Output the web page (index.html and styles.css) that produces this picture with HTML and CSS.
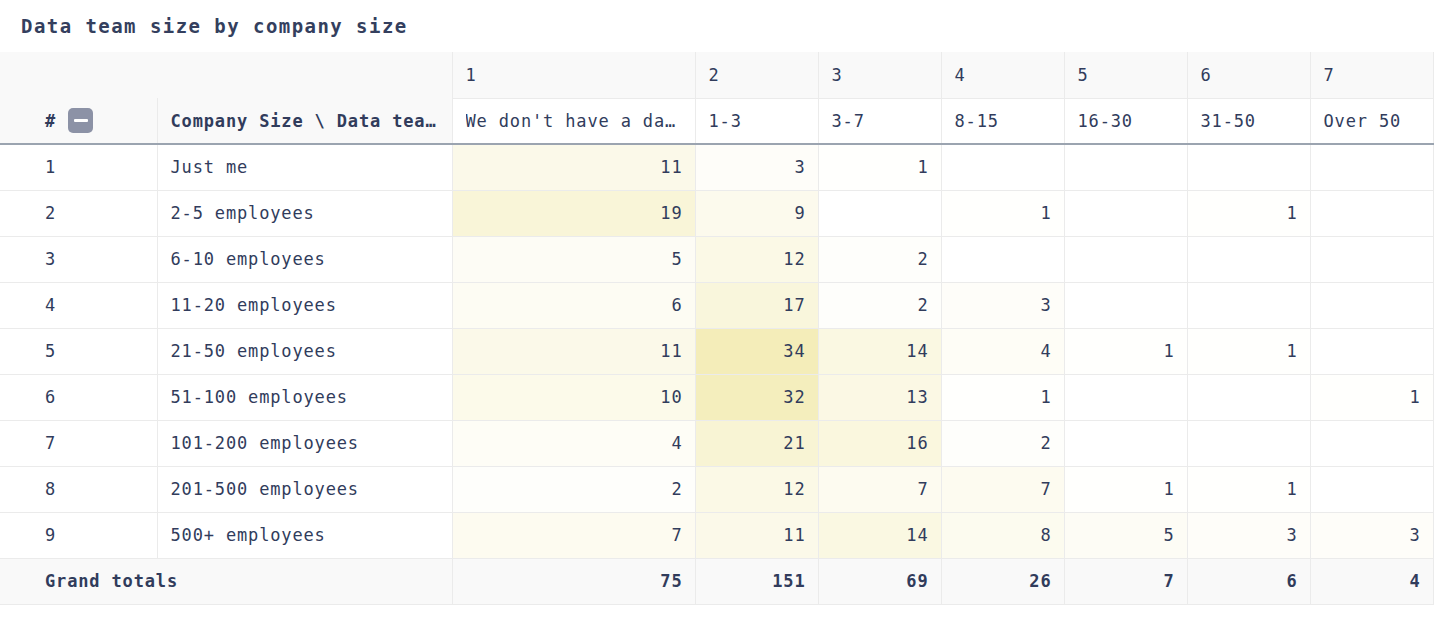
FILE: index.html
```html
<!DOCTYPE html>
<html>
<head>
<meta charset="utf-8">
<link rel="stylesheet" href="styles.css">
</head>
<body>
<h1 class="title">Data team size by company size</h1>
<table class="pivot">
  <colgroup>
    <col class="c-num"><col class="c-name"><col class="c-wide">
    <col class="c-val"><col class="c-val"><col class="c-val"><col class="c-val"><col class="c-val"><col class="c-val">
  </colgroup>
  <thead>
    <tr class="idx-row">
      <th colspan="2" class="blank"></th>
      <th>1</th><th>2</th><th>3</th><th>4</th><th>5</th><th>6</th><th>7</th>
    </tr>
    <tr class="label-row">
      <th class="hash"><span class="hash-wrap">#<span class="collapse"><span class="bar"></span></span></span></th>
      <th class="name-head"><span class="ellip">Company Size \ Data team size</span></th>
      <th><span class="ellip">We don't have a data team</span></th>
      <th>1-3</th><th>3-7</th><th>8-15</th><th>16-30</th><th>31-50</th><th>Over 50</th>
    </tr>
  </thead>
  <tbody>
    <tr><td class="rn">1</td><td class="nm">Just me</td>
      <td style="background:rgba(230,215,100,0.146)">11</td><td style="background:rgba(230,215,100,0.04)">3</td><td style="background:rgba(230,215,100,0.013)">1</td><td></td><td></td><td></td><td></td></tr>
    <tr><td class="rn">2</td><td class="nm">2-5 employees</td>
      <td style="background:rgba(230,215,100,0.251)">19</td><td style="background:rgba(230,215,100,0.119)">9</td><td></td><td style="background:rgba(230,215,100,0.013)">1</td><td></td><td style="background:rgba(230,215,100,0.013)">1</td><td></td></tr>
    <tr><td class="rn">3</td><td class="nm">6-10 employees</td>
      <td style="background:rgba(230,215,100,0.066)">5</td><td style="background:rgba(230,215,100,0.159)">12</td><td style="background:rgba(230,215,100,0.026)">2</td><td></td><td></td><td></td><td></td></tr>
    <tr><td class="rn">4</td><td class="nm">11-20 employees</td>
      <td style="background:rgba(230,215,100,0.079)">6</td><td style="background:rgba(230,215,100,0.225)">17</td><td style="background:rgba(230,215,100,0.026)">2</td><td style="background:rgba(230,215,100,0.04)">3</td><td></td><td></td><td></td></tr>
    <tr><td class="rn">5</td><td class="nm">21-50 employees</td>
      <td style="background:rgba(230,215,100,0.146)">11</td><td style="background:rgba(230,215,100,0.45)">34</td><td style="background:rgba(230,215,100,0.185)">14</td><td style="background:rgba(230,215,100,0.053)">4</td><td style="background:rgba(230,215,100,0.013)">1</td><td style="background:rgba(230,215,100,0.013)">1</td><td></td></tr>
    <tr><td class="rn">6</td><td class="nm">51-100 employees</td>
      <td style="background:rgba(230,215,100,0.132)">10</td><td style="background:rgba(230,215,100,0.424)">32</td><td style="background:rgba(230,215,100,0.172)">13</td><td style="background:rgba(230,215,100,0.013)">1</td><td></td><td></td><td style="background:rgba(230,215,100,0.013)">1</td></tr>
    <tr><td class="rn">7</td><td class="nm">101-200 employees</td>
      <td style="background:rgba(230,215,100,0.053)">4</td><td style="background:rgba(230,215,100,0.278)">21</td><td style="background:rgba(230,215,100,0.212)">16</td><td style="background:rgba(230,215,100,0.026)">2</td><td></td><td></td><td></td></tr>
    <tr><td class="rn">8</td><td class="nm">201-500 employees</td>
      <td style="background:rgba(230,215,100,0.026)">2</td><td style="background:rgba(230,215,100,0.159)">12</td><td style="background:rgba(230,215,100,0.093)">7</td><td style="background:rgba(230,215,100,0.093)">7</td><td style="background:rgba(230,215,100,0.013)">1</td><td style="background:rgba(230,215,100,0.013)">1</td><td></td></tr>
    <tr><td class="rn">9</td><td class="nm">500+ employees</td>
      <td style="background:rgba(230,215,100,0.093)">7</td><td style="background:rgba(230,215,100,0.146)">11</td><td style="background:rgba(230,215,100,0.185)">14</td><td style="background:rgba(230,215,100,0.106)">8</td><td style="background:rgba(230,215,100,0.066)">5</td><td style="background:rgba(230,215,100,0.04)">3</td><td style="background:rgba(230,215,100,0.04)">3</td></tr>
  </tbody>
  <tfoot>
    <tr><td colspan="2" class="gt">Grand totals</td>
      <td>75</td><td>151</td><td>69</td><td>26</td><td>7</td><td>6</td><td>4</td></tr>
  </tfoot>
</table>
</body>
</html>
```
FILE: styles.css
```css
html, body {
  margin: 0;
  padding: 0;
  background: #ffffff;
}
body {
  font-family: "DejaVu Sans Mono", "Liberation Mono", monospace;
  color: #313c5c;
}
.title {
  margin: 0;
  padding: 14px 0 0 21px;
  height: 38px;
  box-sizing: border-box;
  font-size: 19px;
  line-height: 24px;
  font-weight: bold;
  letter-spacing: 1.45px;
  color: #343f5e;
}
.pivot {
  border-collapse: collapse;
  table-layout: fixed;
  width: 1433px;
  font-size: 17px;
  letter-spacing: 0.85px;
  margin-top: 14px;
}
.c-num { width: 157px; }
.c-name { width: 295px; }
.c-wide { width: 243px; }
.c-val { width: 123px; }

.pivot th, .pivot td {
  height: 46px;
  padding: 0 12px 0 13px;
  border: 1px solid #ebebeb;
  box-sizing: border-box;
  white-space: nowrap;
  overflow: hidden;
  vertical-align: middle;
}
.pivot th {
  font-weight: normal;
  text-align: left;
}
.pivot tr > :first-child { border-left: none; }
.pivot thead tr:first-child th { border-top: none; }

.idx-row th { background: #f9f9f9; }
.idx-row th.blank { border-bottom: none; }
.label-row th { background: #ffffff; border-bottom: 2px solid #9ba4b0; }
.label-row th.hash, .label-row th.name-head {
  background: #f9f9f9;
  font-weight: bold;
}
.label-row th.hash { border-top: none; padding-left: 45px; }
.label-row th.name-head { border-top: none; }
.ellip {
  display: block;
  overflow: hidden;
  text-overflow: ellipsis;
}
.hash-wrap {
  display: flex;
  align-items: center;
  gap: 12px;
}
.collapse {
  width: 25px;
  height: 25px;
  border-radius: 5px;
  background: #8c92a6;
  display: flex;
  align-items: center;
  justify-content: center;
}
.collapse .bar {
  width: 14px;
  height: 3px;
  border-radius: 1px;
  background: #ffffff;
}

.pivot td { text-align: right; }
.pivot td.rn { text-align: left; padding-left: 45px; }
.pivot td.nm { text-align: left; }
tfoot td {
  background: #f9f9f9;
  font-weight: bold;
}
tfoot td.gt { text-align: left; padding-left: 45px; }
```
